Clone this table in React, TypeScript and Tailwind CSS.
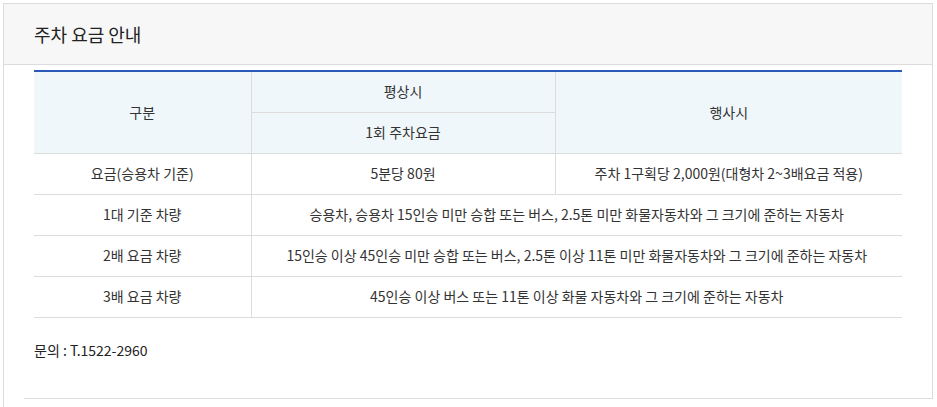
import React from "react";

const font = { fontFamily: '"Malgun Gothic", "Noto Sans CJK KR", "Noto Sans", sans-serif' };

export default function App() {
  const td = "border-b border-[#dcdcdc] text-center text-[14px] text-[#333] h-[41px] p-0";
  return (
    <div className="w-[937px] h-[407px] bg-white overflow-hidden pt-[3px] pl-[3px] pr-[4px]" style={font}>
      <div className="border-t border-x border-[#dcdcdc] h-[396px] flex flex-col">
        <div className="h-[61px] bg-[#f7f7f7] border-b border-[#dcdcdc] flex items-center px-[30px]">
          <h2 className="text-[18px] text-[#222]">주차 요금 안내</h2>
        </div>
        <div className="px-[30px] pt-[5px]">
          <table className="w-[868px] border-collapse table-fixed border-t-2 border-[#2b59b8]">
            <colgroup>
              <col className="w-[217px]" />
              <col className="w-[304px]" />
              <col className="w-[347px]" />
            </colgroup>
            <tbody>
              <tr>
                <td rowSpan={2} className={`${td} bg-[#f0f7fb] border-r`}>구분</td>
                <td className={`${td} bg-[#f0f7fb] border-r`}>평상시</td>
                <td rowSpan={2} className={`${td} bg-[#f0f7fb]`}>행사시</td>
              </tr>
              <tr>
                <td className={`${td} bg-[#f0f7fb] border-r`}>1회 주차요금</td>
              </tr>
              <tr>
                <td className={`${td} border-r`}>요금(승용차 기준)</td>
                <td className={`${td} border-r`}>5분당 80원</td>
                <td className={td}>주차 1구획당 2,000원(대형차 2~3배요금 적용)</td>
              </tr>
              <tr>
                <td className={`${td} border-r`}>1대 기준 차량</td>
                <td colSpan={2} className={td}>승용차, 승용차 15인승 미만 승합 또는 버스, 2.5톤 미만 화물자동차와 그 크기에 준하는 자동차</td>
              </tr>
              <tr>
                <td className={`${td} border-r`}>2배 요금 차량</td>
                <td colSpan={2} className={td}>15인승 이상 45인승 미만 승합 또는 버스, 2.5톤 이상 11톤 미만 화물자동차와 그 크기에 준하는 자동차</td>
              </tr>
              <tr>
                <td className={`${td} border-r`}>3배 요금 차량</td>
                <td colSpan={2} className={td}>45인승 이상 버스 또는 11톤 이상 화물 자동차와 그 크기에 준하는 자동차</td>
              </tr>
            </tbody>
          </table>
          <p className="mt-[23px] text-[14px] text-[#222] leading-[18px]">문의 : T.1522-2960</p>
        </div>
        <div className="flex-1" />
        <div className="ml-[20px] border-b border-[#dcdcdc]" />
      </div>
      <div className="h-[10px] border-l border-[#dcdcdc]" />
    </div>
  );
}
